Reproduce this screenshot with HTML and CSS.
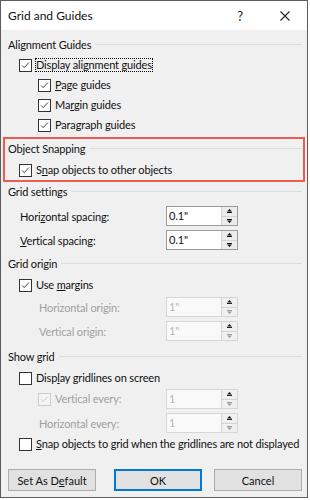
FILE: index.html
```html
<!DOCTYPE html>
<html>
<head>
  <title>Grid and Guides</title>
  <link rel="stylesheet" href="styles.css">
</head>
<body>
  <div class="dialog">
    <div class="titlebar">
      <span class="title">Grid and Guides</span>
      <span class="title-btn help">?</span>
      <span class="title-btn close">
        <svg viewBox="0 0 10 10" width="10" height="10">
          <path d="M0.5 0.5L9.5 9.5M9.5 0.5L0.5 9.5" stroke="#222" stroke-width="1.1"/>
        </svg>
      </span>
    </div>

    <div class="content">
      <!-- Alignment Guides -->
      <div class="group-head first">Alignment Guides</div>
      <div class="check lvl1 mt1">
        <span class="box"><svg viewBox="0 0 13 13"><path d="M2.5 6.5L5 9L10.5 3" /></svg></span>
        <span class="label focus">Display alignment guides</span>
      </div>
      <div class="check lvl2">
        <span class="box"><svg viewBox="0 0 13 13"><path d="M2.5 6.5L5 9L10.5 3" /></svg></span>
        <span class="label"><u>P</u>age guides</span>
      </div>
      <div class="check lvl2">
        <span class="box"><svg viewBox="0 0 13 13"><path d="M2.5 6.5L5 9L10.5 3" /></svg></span>
        <span class="label">Ma<u>r</u>gin guides</span>
      </div>
      <div class="check lvl2">
        <span class="box"><svg viewBox="0 0 13 13"><path d="M2.5 6.5L5 9L10.5 3" /></svg></span>
        <span class="label">Paragraph guides</span>
      </div>

      <!-- Object Snapping (highlighted) -->
      <div class="highlight">
        <div class="group-head small">Object Snapping</div>
        <div class="check lvl1 mt3">
          <span class="box"><svg viewBox="0 0 13 13"><path d="M2.5 6.5L5 9L10.5 3" /></svg></span>
          <span class="label">S<u>n</u>ap objects to other objects</span>
        </div>
      </div>

      <!-- Grid settings -->
      <div class="group-head small">Grid settings</div>
      <div class="spin-row lvl1 mt5">
        <span class="spin-label">Hori<u>z</u>ontal spacing:</span>
        <div class="spin">
          <span class="field">0.1"</span>
          <span class="arrows">
            <span class="arrow"><svg viewBox="0 0 5 4" width="5" height="4"><path d="M0 2.5L2.5 0L5 2.5Z"/><rect x="0" y="3" width="5" height="1"/></svg></span>
            <span class="arrow"><svg viewBox="0 0 5 4" width="5" height="4"><rect x="0" y="0" width="5" height="1"/><path d="M0 1.5L2.5 4L5 1.5Z"/></svg></span>
          </span>
        </div>
      </div>
      <div class="spin-row lvl1 mt4">
        <span class="spin-label"><u>V</u>ertical spacing:</span>
        <div class="spin">
          <span class="field">0.1"</span>
          <span class="arrows">
            <span class="arrow"><svg viewBox="0 0 5 4" width="5" height="4"><path d="M0 2.5L2.5 0L5 2.5Z"/><rect x="0" y="3" width="5" height="1"/></svg></span>
            <span class="arrow"><svg viewBox="0 0 5 4" width="5" height="4"><rect x="0" y="0" width="5" height="1"/><path d="M0 1.5L2.5 4L5 1.5Z"/></svg></span>
          </span>
        </div>
      </div>

      <!-- Grid origin -->
      <div class="group-head small mt4">Grid origin</div>
      <div class="check lvl1 mt2">
        <span class="box"><svg viewBox="0 0 13 13"><path d="M2.5 6.5L5 9L10.5 3" /></svg></span>
        <span class="label">Use <u>m</u>argins</span>
      </div>
      <div class="spin-row lvl2 disabled mt2">
        <span class="spin-label">Horizontal origin:</span>
        <div class="spin">
          <span class="field">1"</span>
          <span class="arrows">
            <span class="arrow up-dis"><svg viewBox="0 0 5 4" width="5" height="4"><path d="M0 2.5L2.5 0L5 2.5Z"/><rect x="0" y="3" width="5" height="1"/></svg></span>
            <span class="arrow"><svg viewBox="0 0 5 4" width="5" height="4"><rect x="0" y="0" width="5" height="1"/><path d="M0 1.5L2.5 4L5 1.5Z"/></svg></span>
          </span>
        </div>
      </div>
      <div class="spin-row lvl2 disabled mt4">
        <span class="spin-label">Vertical origin:</span>
        <div class="spin">
          <span class="field">1"</span>
          <span class="arrows">
            <span class="arrow up-dis"><svg viewBox="0 0 5 4" width="5" height="4"><path d="M0 2.5L2.5 0L5 2.5Z"/><rect x="0" y="3" width="5" height="1"/></svg></span>
            <span class="arrow"><svg viewBox="0 0 5 4" width="5" height="4"><rect x="0" y="0" width="5" height="1"/><path d="M0 1.5L2.5 4L5 1.5Z"/></svg></span>
          </span>
        </div>
      </div>

      <!-- Show grid -->
      <div class="group-head small mt6">Show grid</div>
      <div class="check lvl1 mt2">
        <span class="box"></span>
        <span class="label">Disp<u>l</u>ay gridlines on screen</span>
      </div>
      <div class="spin-row lvl2 disabled mt1">
        <span class="spin-label with-check">
          <span class="box"><svg viewBox="0 0 13 13"><path d="M2.5 6.5L5 9L10.5 3" /></svg></span>
          <span class="label">Vertical every:</span>
        </span>
        <div class="spin">
          <span class="field">1</span>
          <span class="arrows">
            <span class="arrow up-dis"><svg viewBox="0 0 5 4" width="5" height="4"><path d="M0 2.5L2.5 0L5 2.5Z"/><rect x="0" y="3" width="5" height="1"/></svg></span>
            <span class="arrow"><svg viewBox="0 0 5 4" width="5" height="4"><rect x="0" y="0" width="5" height="1"/><path d="M0 1.5L2.5 4L5 1.5Z"/></svg></span>
          </span>
        </div>
      </div>
      <div class="spin-row lvl2 disabled mt4">
        <span class="spin-label">Horizontal every:</span>
        <div class="spin">
          <span class="field">1</span>
          <span class="arrows">
            <span class="arrow up-dis"><svg viewBox="0 0 5 4" width="5" height="4"><path d="M0 2.5L2.5 0L5 2.5Z"/><rect x="0" y="3" width="5" height="1"/></svg></span>
            <span class="arrow"><svg viewBox="0 0 5 4" width="5" height="4"><rect x="0" y="0" width="5" height="1"/><path d="M0 1.5L2.5 4L5 1.5Z"/></svg></span>
          </span>
        </div>
      </div>
      <div class="check lvl1 mt1">
        <span class="box"></span>
        <span class="label"><u>S</u>nap objects to grid when the gridlines are not displayed</span>
      </div>

      <div class="buttons">
        <button class="btn">Set As D<u>e</u>fault</button>
        <button class="btn btn-ok">OK</button>
        <button class="btn btn-cancel">Cancel</button>
      </div>
    </div>
  </div>
</body>
</html>
```

FILE: styles.css
```css
:root {
  --ui-font: Lato, "Liberation Sans", sans-serif;
  --face: #f0f0f0;
  --text: #111111;
  --text-disabled: #a0a0a0;
  --rule: #dcdcdc;
  --accent: #0078d7;
  --highlight: #ef5a52;
}

body {
  margin: 0;
  background: #ffffff;
  font-family: var(--ui-font);
  font-size: 11px;
  letter-spacing: -0.15px;
  color: var(--text);
}

.dialog {
  width: 308px;
  height: 498px;
  box-sizing: border-box;
  border: 1px solid #5c5c5c;
  background: var(--face);
  display: flex;
  flex-direction: column;
}

/* Title bar */
.titlebar {
  height: 29px;
  flex-shrink: 0;
  background: #ffffff;
  display: flex;
  align-items: center;
  padding-left: 7px;
}

.title {
  flex: 1;
  font-size: 12px;
  letter-spacing: 0;
}

.title-btn {
  height: 29px;
  display: flex;
  align-items: center;
  justify-content: center;
}

.help {
  width: 46px;
  font-size: 13px;
  color: #222;
}

.close {
  width: 44px;
}

/* Body */
.content {
  padding: 4px 5px 0 7px;
  display: flex;
  flex-direction: column;
}

.group-head {
  height: 20px;
  display: flex;
  align-items: center;
  gap: 4px;
  white-space: nowrap;
}

.group-head.small {
  height: 19px;
}

.highlight .group-head.small {
  height: 18px;
}

.group-head:after {
  content: "";
  flex: 1;
  height: 1px;
  background: var(--rule);
}

.highlight {
  margin: 2px -3px 0 -5px;
  padding: 0 1px 0 3px;
  border: 2px solid var(--highlight);
}

.mt1 { margin-top: 1px; }
.mt2 { margin-top: 2px; }
.mt3 { margin-top: 3px; }
.mt4 { margin-top: 4px; }
.mt5 { margin-top: 5px; }
.mt6 { margin-top: 6px; }

/* Checkboxes */
.check {
  height: 20px;
  display: flex;
  align-items: center;
}

.lvl1 { padding-left: 11px; }
.lvl2 { padding-left: 30px; }

.box {
  width: 13px;
  height: 13px;
  box-sizing: border-box;
  border: 1px solid #333333;
  background: #ffffff;
  flex-shrink: 0;
  display: flex;
}

.box svg {
  width: 11px;
  height: 11px;
  fill: none;
  stroke: #222;
  stroke-width: 1;
}

.label {
  margin-left: 4px;
  line-height: 12px;
  white-space: nowrap;
}

.label.focus {
  margin-left: 3px;
  border: 1px dotted #000;
}

/* Spin boxes */
.spin-row {
  height: 20px;
  display: grid;
  grid-template-columns: 1fr 72px;
  align-items: center;
  margin-right: 64px;
}

.spin-label {
  padding-left: 1px;
  white-space: nowrap;
}

.spin-label.with-check {
  display: flex;
  align-items: center;
  padding-left: 0;
}

.spin {
  height: 20px;
  box-sizing: border-box;
  border: 1px solid #9a9a9a;
  background: #ffffff;
  display: flex;
}

.field {
  flex: 1;
  padding-left: 2px;
  line-height: 18px;
}

.arrows {
  width: 15px;
  display: flex;
  flex-direction: column;
  border-left: 1px solid #d4d4d4;
}

.arrow {
  flex: 1;
  background: #ececec;
  display: flex;
  align-items: center;
  justify-content: center;
}

.arrow + .arrow {
  border-top: 1px solid #d4d4d4;
}

.arrow svg {
  fill: #111;
}

.disabled {
  color: var(--text-disabled);
}

.disabled .spin {
  border-color: #d6d6d6;
  background: #f9f9f9;
  color: #b4b4b4;
}

.disabled .arrow {
  background: #f0f0f0;
}

.disabled .arrow svg {
  fill: #9a9a9a;
}

.disabled .arrow.up-dis svg {
  fill: #222;
}

.disabled .box {
  border-color: #cccccc;
  background: #f4f4f4;
}

.disabled .box svg {
  stroke: #c4c4c4;
}

/* Dialog buttons */
.buttons {
  display: flex;
  margin-top: 15px;
}

.btn {
  width: 88px;
  height: 22px;
  padding: 0;
  border: 1px solid #adadad;
  background: #e1e1e1;
  font-family: var(--ui-font);
  font-size: 11px;
  color: var(--text);
}

.btn-ok {
  margin-left: 18px;
  border-color: var(--accent);
  box-shadow: inset 0 0 0 1px var(--accent);
}

.btn-cancel {
  margin-left: auto;
}
```
